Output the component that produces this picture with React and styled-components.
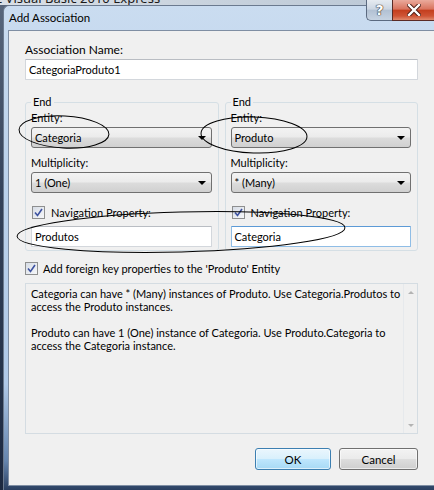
import React from 'react';
import styled, { createGlobalStyle } from 'styled-components';

const Global = createGlobalStyle`
  html, body { margin: 0; padding: 0; }
  body {
    width: 434px; height: 490px; overflow: hidden;
    background: #24324a;
    font-family: Lato, "Noto Sans", sans-serif;
  }
`;

const Page = styled.div`
  position: relative;
  width: 434px;
  height: 490px;
  overflow: hidden;
  display: flex;
  flex-direction: column;
  background: linear-gradient(to bottom, #59677c 0%, #34425a 40%, #1c2940 100%);
`;

const Backdrop = styled.div`
  flex: none;
  height: 5px;
  overflow: hidden;
  background: linear-gradient(to right, #d9dfe6, #c8d2dd 50%, #b9c6d4);
  font: 13px/13px "Noto Sans", sans-serif;
  color: #1a1a1a;
  white-space: nowrap;
  & > span { display: block; margin-top: -8px; margin-left: -4px; }
`;

const Window = styled.div`
  flex: 1;
  margin-left: 3px;
  display: flex;
  flex-direction: column;
  border-top-left-radius: 6px;
  border: 1px solid #6b7a8f;
  border-right: none;
  border-bottom: none;
  padding-left: 4px;
  background: linear-gradient(to bottom, #cadcf0 0%, #bdd3ec 30%, #b0c9e8 78%, #6585ae 94%, #2a3f60 100%);
`;

const TitleBar = styled.div`
  flex: none;
  height: 24px;
  display: flex;
  align-items: center;
  padding: 0 0 2px 1px;
  box-sizing: border-box;
  font-size: 11.5px;
  color: #000;
`;

const Client = styled.div`
  flex: 1;
  margin-bottom: 4px;
  background: #f0f0f0;
  border: 1px solid #7f8ea3;
  border-right: none;
  display: flex;
  flex-direction: column;
  padding: 12px 16px 0 16px;
  font-size: 11px;
  color: #000;
`;

const Label = styled.div`
  height: 14px;
  line-height: 14px;
  white-space: nowrap;
  font-size: ${p => p.$size || 11}px;
  margin-top: ${p => p.$mt || 0}px;
`;

const TextBox = styled.div`
  height: 21px;
  box-sizing: border-box;
  margin-top: ${p => p.$mt || 0}px;
  border: 1px solid ${p => (p.$focused ? '#8fbde6' : '#d3d7dc')};
  border-top-color: ${p => (p.$focused ? '#5c9ad6' : '#b9bdc3')};
  border-radius: 1px;
  background: #fff;
  padding-left: 3px;
  line-height: 19px;
  white-space: nowrap;
`;

const Groups = styled.div`
  display: grid;
  grid-template-columns: 1fr 1fr;
  gap: 6px;
  margin-top: 15px;
`;

const Group = styled.fieldset`
  margin: 0;
  min-width: 0;
  padding: 0 6px 3px 5px;
  border: 1px solid #d5dfe5;
  border-radius: 3px;
  display: flex;
  flex-direction: column;
`;

const Legend = styled.legend`
  padding: 0 2px;
  margin-left: 0;
  height: 14px;
  line-height: 14px;
  font-size: 11px;
`;

const Combo = styled.div`
  height: 21px;
  box-sizing: border-box;
  margin-top: 2px;
  border: 1px solid #707070;
  border-radius: 3px;
  background: linear-gradient(to bottom, #f3f3f3 0%, #ebebeb 48%, #dcdcdc 52%, #d0d0d0 100%);
  display: flex;
  align-items: center;
  justify-content: space-between;
  padding: 0 5px 0 3px;
  white-space: nowrap;
`;

const Arrow = styled.span`
  width: 0;
  height: 0;
  border-left: 4px solid transparent;
  border-right: 4px solid transparent;
  border-top: 4px solid #000;
`;

const CheckRow = styled.div`
  display: flex;
  align-items: center;
  height: 14px;
  gap: ${p => p.$gap}px;
  margin-top: ${p => p.$mt}px;
  padding-left: ${p => p.$pl || 0}px;
  white-space: nowrap;
`;

const Box = styled.span`
  width: 13px;
  height: 13px;
  box-sizing: border-box;
  border: 1px solid #8e8f8f;
  background: linear-gradient(135deg, #d7dde6 0%, #f6f7f9 100%);
  display: flex;
  align-items: center;
  justify-content: center;
  flex: none;
`;

const Info = styled.div`
  height: 151px;
  box-sizing: border-box;
  margin-top: 8px;
  border: 1px solid #d4dce2;
  background: #f0f0f0;
  display: flex;
`;

const InfoText = styled.div`
  flex: 1;
  padding: 3px 0 0 5px;
  line-height: 13px;
  white-space: nowrap;
`;

const Line = styled.div`
  height: 13px;
`;

const Scroll = styled.div`
  width: 14px;
  display: flex;
  flex-direction: column;
  justify-content: space-between;
  align-items: center;
  padding: 7px 0 6px;
  box-sizing: border-box;
  border-left: 1px solid #e6e9ec;
`;

const ScrollArrow = styled.span`
  width: 0;
  height: 0;
  border-left: 3px solid transparent;
  border-right: 3px solid transparent;
  ${p => (p.$up ? 'border-bottom: 3px solid #b3b3b3;' : 'border-top: 3px solid #b3b3b3;')}
`;

const Buttons = styled.div`
  display: flex;
  justify-content: flex-end;
  gap: 8px;
  margin-top: 14px;
`;

const Button = styled.div`
  width: ${p => p.$w}px;
  height: 22px;
  box-sizing: border-box;
  border-radius: 3px;
  border: 1px solid ${p => (p.$primary ? '#3c7fb1' : '#707070')};
  background: ${p =>
    p.$primary
      ? 'linear-gradient(to bottom, #eaf6fd 0%, #d9f0fc 48%, #bee6fd 52%, #a7d9f5 100%)'
      : 'linear-gradient(to bottom, #f3f3f3 0%, #ebebeb 48%, #dddddd 52%, #cfcfcf 100%)'};
  box-shadow: inset 0 0 0 1px rgba(255, 255, 255, 0.6);
  display: flex;
  align-items: center;
  justify-content: center;
  font-size: 11.5px;
`;

const Caption = styled.div`
  position: absolute;
  top: 0;
  right: 0;
  display: flex;
`;

const HelpBtn = styled.div`
  width: 26px;
  height: 21px;
  box-sizing: border-box;
  border: 1px solid #5b6a80;
  border-top: none;
  border-right: none;
  border-bottom-left-radius: 5px;
  background: linear-gradient(to bottom, #e6ebf1 0%, #ccd6e2 45%, #b2c1d3 52%, #c6d3e2 100%);
  display: flex;
  align-items: center;
  justify-content: center;
  font: bold 14px "DejaVu Sans", sans-serif;
  color: #fff;
  text-shadow: 0 0 1px #333, 0 0 1px #333, 0 0 1px #333;
`;

const CloseBtn = styled.div`
  width: 42px;
  height: 21px;
  box-sizing: border-box;
  border: 1px solid #5a2b25;
  border-top: none;
  border-right: none;
  background: linear-gradient(to bottom, #eaaa9c 0%, #d9745f 45%, #c43f1f 52%, #cf5435 80%, #e0896d 100%);
  display: flex;
  align-items: center;
  justify-content: center;
`;

const Overlay = styled.svg`
  position: absolute;
  left: 0;
  top: 0;
  pointer-events: none;
`;

const Check = () => (
  <Box>
    <svg width="9" height="9" viewBox="0 0 9 9">
      <path d="M1 4.5 L3.5 7.5 L8 1" fill="none" stroke="#3d52a0" strokeWidth="1.6" />
    </svg>
  </Box>
);

const End = ({ entity, mult, nav, focused }) => (
  <Group>
    <Legend>End</Legend>
    <Label $mt={2}>Entity:</Label>
    <Combo>
      <span>{entity}</span>
      <Arrow />
    </Combo>
    <Label $mt={8}>Multiplicity:</Label>
    <Combo>
      <span>{mult}</span>
      <Arrow />
    </Combo>
    <CheckRow $gap={6} $mt={12} $pl={1}>
      <Check />
      <span>Navigation Property:</span>
    </CheckRow>
    <TextBox $mt={7} $focused={focused}>{nav}</TextBox>
  </Group>
);

export default function App() {
  return (
    <>
      <Global />
      <Page>
        <Backdrop>
          <span>c Visual Basic 2010 Express</span>
        </Backdrop>
        <Window>
          <TitleBar>Add Association</TitleBar>
          <Client>
            <Label $size={12}>Association Name:</Label>
            <TextBox $mt={2}>CategoriaProduto1</TextBox>
            <Groups>
              <End entity="Categoria" mult="1 (One)" nav="Produtos" />
              <End entity="Produto" mult="* (Many)" nav="Categoria" focused />
            </Groups>
            <CheckRow $gap={5} $mt={10}>
              <Check />
              <span>Add foreign key properties to the 'Produto' Entity</span>
            </CheckRow>
            <Info>
              <InfoText>
                <Line>Categoria can have * (Many) instances of Produto. Use Categoria.Produtos to</Line>
                <Line>access the Produto instances.</Line>
                <Line />
                <Line>Produto can have 1 (One) instance of Categoria. Use Produto.Categoria to</Line>
                <Line>access the Categoria instance.</Line>
              </InfoText>
              <Scroll>
                <ScrollArrow $up />
                <ScrollArrow />
              </Scroll>
            </Info>
            <Buttons>
              <Button $primary $w={76}>OK</Button>
              <Button $w={79}>Cancel</Button>
            </Buttons>
          </Client>
        </Window>
        <Caption>
          <HelpBtn>?</HelpBtn>
          <CloseBtn>
            <svg width="14" height="12" viewBox="0 0 14 12">
              <path d="M2 1 L12 11 M12 1 L2 11" stroke="#4a1a12" strokeWidth="4.2" strokeLinecap="square" />
              <path d="M2 1 L12 11 M12 1 L2 11" stroke="#fff" strokeWidth="2.4" strokeLinecap="square" />
            </svg>
          </CloseBtn>
        </Caption>
        <Overlay width="434" height="490" viewBox="0 0 434 490">
          <ellipse cx="64" cy="132" rx="45" ry="16" transform="rotate(3 64 132)" fill="none" stroke="#000" strokeWidth="1" />
          <ellipse cx="254" cy="135" rx="53" ry="18" transform="rotate(2 254 135)" fill="none" stroke="#000" strokeWidth="1" />
          <ellipse cx="181" cy="232" rx="164" ry="20" transform="rotate(-1.5 181 232)" fill="none" stroke="#000" strokeWidth="1" />
        </Overlay>
      </Page>
    </>
  );
}
